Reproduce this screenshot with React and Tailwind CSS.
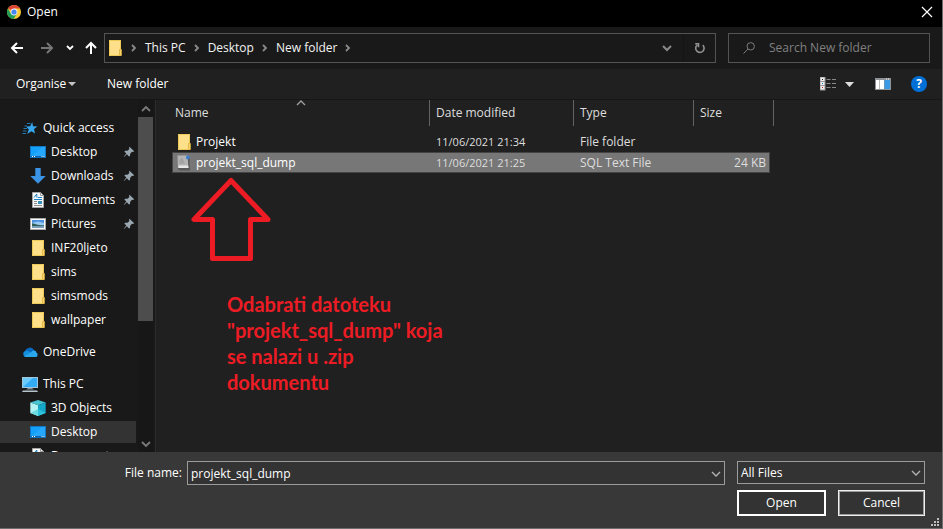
import React from "react";

const font = "font-['Open_Sans','Noto_Sans',sans-serif]";

function FolderIcon() {
  return (
    <svg className="h-4 w-4 shrink-0" viewBox="0 0 16 16">
      <rect x="2" y="0" width="12" height="16" fill="#ffe08a" />
      <path d="M2.5 0.5H13.5V9M2.5 0.5V15.5H12" fill="none" stroke="#efc956" />
      <rect x="12" y="9" width="2" height="6" fill="#ffe08a" />
      <path d="M12.5 15.5V9.5H14.5V15.5Z" fill="#fbd66a" stroke="#d8ab38" strokeWidth="0.7" />
    </svg>
  );
}

function ChromeIcon() {
  return (
    <svg className="h-4 w-4 shrink-0" viewBox="0 0 16 16">
      <circle cx="8" cy="8" r="7" fill="#fbc834" />
      <path d="M8 8L1.94 4.5A7 7 0 0 1 14.06 4.5H8Z" fill="#dc4437" />
      <path d="M8 8L4.9 9.7L1.94 4.5A7 7 0 0 0 7.6 15L11 9.8Z" fill="#1f9d58" />
      <circle cx="8" cy="8" r="3.4" fill="#f4f4f4" />
      <circle cx="8" cy="8" r="2.6" fill="#4486f4" />
    </svg>
  );
}

function StarIcon() {
  return (
    <svg className="h-4 w-4 shrink-0" viewBox="0 0 16 16">
      <path d="M10.2 2L11 6.2L15.5 6.6L12 9L13 13.6L9.4 11.2L5.2 14L6.8 9.6L4.2 6.6L8.2 6.2Z" fill="#35a8f0" />
      <path d="M5 3.5H8.5M2.5 6H5M1.5 8.5H5M1 11H4.5M0.5 13.5H4" stroke="#2177b2" />
    </svg>
  );
}

function DesktopIcon() {
  return (
    <svg className="h-4 w-4 shrink-0" viewBox="0 0 16 16">
      <rect x="0.5" y="2.5" width="15" height="11" fill="#15a0fb" stroke="#1278c4" />
      <path d="M1 13L12 3H15V13Z" fill="#35adff" opacity="0.5" />
      <rect x="1" y="12" width="14" height="1.4" fill="#0a62ac" />
      <path d="M2 12.5H3M4 12.5H5M11.5 12.5H12.5M13.5 12.5H14.5" stroke="#fff" />
    </svg>
  );
}

function DownloadIcon() {
  return (
    <svg className="h-4 w-4 shrink-0" viewBox="0 0 16 16">
      <path d="M5.3 0H10.7V8H15.7L8 15.7L0.3 8H5.3Z" fill="#3a93e4" />
    </svg>
  );
}

function DocumentIcon() {
  return (
    <svg className="h-4 w-4 shrink-0" viewBox="0 0 16 16">
      <path d="M2.5 0.5H10.5L13.5 3.5V15.5H2.5Z" fill="#f8f8f8" stroke="#a6a6a6" />
      <path d="M10.5 0.5V3.5H13.5" fill="none" stroke="#999" />
      <path d="M4 5.5L6.8 2V5.5M7.8 5.5H12M4 7.5H12" fill="none" stroke="#1d83c9" />
      <path d="M4 9.5H7M4 11.5H7M4 13.5H12" stroke="#8c8c8c" />
      <rect x="8" y="9" width="4" height="3" fill="#3292bb" />
    </svg>
  );
}

function PicturesIcon() {
  return (
    <svg className="h-4 w-4 shrink-0" viewBox="0 0 16 16">
      <rect x="0.5" y="2.5" width="15" height="11" fill="#f8f8f8" stroke="#aaa" />
      <rect x="2" y="4" width="12" height="8" fill="#9bcbf3" />
      <path d="M2 4H14V7L8 5.5L2 7Z" fill="#4a91e0" />
      <path d="M2 7.2C5 7.5 8 9.5 14 9.3V10.5H2Z" fill="#315f57" />
      <rect x="2" y="10.3" width="12" height="1.7" fill="#7c9fbb" />
    </svg>
  );
}

function CloudIcon() {
  return (
    <svg className="h-4 w-4 shrink-0" viewBox="0 0 16 16">
      <path d="M3 7A5 5 0 0 1 12 6L14 9L4 12Z" fill="#0868bd" />
      <path d="M3.5 13A3.3 3.3 0 0 1 3.5 6.7C6 6.4 7 8 12 9V13Z" fill="#1490df" />
      <path d="M9 9C10 5.8 14 5.8 14.3 8.5A2.4 2.4 0 0 1 13.7 13H4Z" fill="#2baaf0" />
      <path d="M2.2 12.6L9 8.6L15.3 12.2C14.9 12.8 14.4 13 13.7 13H3.5C3 13 2.6 12.9 2.2 12.6Z" fill="#28a8ea" />
    </svg>
  );
}

function PcIcon() {
  return (
    <svg className="h-4 w-4 shrink-0" viewBox="0 0 16 16">
      <rect x="0.5" y="1.5" width="15" height="10" fill="#34abf5" stroke="#a2c6dc" />
      <path d="M1 11L11 2H1Z" fill="#6bcbfb" />
      <path d="M4 13.5L6 12H10L12 13.5Z" fill="#82919b" />
      <path d="M1 14.5H15L16 16H0Z" fill="#b7c5cf" />
    </svg>
  );
}

function CubeIcon() {
  return (
    <svg className="h-4 w-4 shrink-0" viewBox="0 0 16 16">
      <path d="M8 0L15.7 2.5L8 5.2L0.3 2.5Z" fill="#45c3d1" />
      <path d="M0.3 2.5L8 5.2V16L0.3 13Z" fill="#b4f3f3" />
      <path d="M15.7 2.5L8 5.2V16L15.7 13Z" fill="#14a7c9" />
      <path d="M0.3 13L8 9V16Z" fill="#6bdce2" />
      <path d="M15.7 13L8 9V16Z" fill="#2fc1da" />
    </svg>
  );
}

function SqlFileIcon() {
  return (
    <svg className="h-4 w-4 shrink-0" viewBox="0 0 16 16">
      <path d="M2 2L13.5 3L14 15.5H4L2 14Z" fill="#585858" />
      <path d="M1.5 0.5H11.5L12.5 13H2Z" fill="#b4b4b4" />
      <path d="M3.5 5L6 2.5L9 8.5L3.5 9Z" fill="#a2a2a2" />
      <path d="M2.5 10.5H12L12.5 13H2.5Z" fill="#e6e6e6" />
      <circle cx="11.8" cy="2.4" r="1.9" fill="#3a80d2" />
    </svg>
  );
}

function PinIcon() {
  return (
    <svg className="h-3 w-3 shrink-0" viewBox="0 0 12 12">
      <path d="M6.5 0.8L11.2 5.2L10 6L9 5.8L7.2 7.8L7 10L6 10.4L3.9 8.3L1 11L0.8 10.8L3.3 7.6L1.4 5.6L2 4.8L4.4 4.7L6.4 2.9L6 1.7Z" fill="#9aa7b0" />
    </svg>
  );
}

function Chevron({ className = "", d = "M1 3L5 7L9 3", width = 1.3 }) {
  return (
    <svg className={`h-[10px] w-[10px] shrink-0 ${className}`} viewBox="0 0 10 10">
      <path d={d} fill="none" stroke="currentColor" strokeWidth={width} />
    </svg>
  );
}

const groups = [
  {
    name: "Quick access",
    Icon: StarIcon,
    items: [
      { name: "Desktop", Icon: DesktopIcon, pinned: true },
      { name: "Downloads", Icon: DownloadIcon, pinned: true },
      { name: "Documents", Icon: DocumentIcon, pinned: true },
      { name: "Pictures", Icon: PicturesIcon, pinned: true },
      { name: "INF20ljeto", Icon: FolderIcon },
      { name: "sims", Icon: FolderIcon },
      { name: "simsmods", Icon: FolderIcon },
      { name: "wallpaper", Icon: FolderIcon },
    ],
  },
  { name: "OneDrive", Icon: CloudIcon, items: [] },
  {
    name: "This PC",
    Icon: PcIcon,
    items: [
      { name: "3D Objects", Icon: CubeIcon },
      { name: "Desktop", Icon: DesktopIcon, current: true },
      { name: "Documents", Icon: DocumentIcon },
    ],
  },
];

function SideItem({ item, nested }) {
  const { name, Icon, pinned, current } = item;
  return (
    <li className="py-px">
      <button
        type="button"
        className={`flex h-[22px] w-full items-center gap-[5px] pr-px ${nested ? "pl-[30px]" : "pl-[22px]"} ${current ? "bg-[#333333]" : ""}`}
      >
        <Icon />
        <span className="flex-1 text-left">{name}</span>
        {pinned && <PinIcon />}
      </button>
    </li>
  );
}

function Sidebar() {
  return (
    <div className="flex w-[156px] shrink-0 border-r border-[#2b2b2b] bg-[#191919]">
      <nav className="w-[136px] overflow-hidden pt-4" aria-label="Folders">
        <ul className="flex flex-col gap-2">
          {groups.map((g) => (
            <li key={g.name}>
              <ul>
                <SideItem item={g} />
                {g.items.map((i) => (
                  <SideItem key={i.name} item={i} nested />
                ))}
              </ul>
            </li>
          ))}
        </ul>
      </nav>
      <div className="ml-0.5 flex w-[15px] flex-col items-center bg-[#171717] text-[#7a7a7a]">
        <div className="flex h-[17px] shrink-0 items-center">
          <Chevron d="M1 7L5 3L9 7" width={1.8} />
        </div>
        <div className="h-[204px] w-full bg-[#4d4d4d]" />
        <div className="mt-auto flex h-4 shrink-0 items-center">
          <Chevron width={1.8} />
        </div>
      </div>
    </div>
  );
}

const files = [
  { name: "Projekt", date: "11/06/2021 21:34", type: "File folder", size: "", Icon: FolderIcon },
  { name: "projekt_sql_dump", date: "11/06/2021 21:25", type: "SQL Text File", size: "24 KB", Icon: SqlFileIcon, selected: true },
];

function FileList() {
  return (
    <table className="ml-4 w-[598px] table-fixed border-collapse text-left">
      <colgroup>
        <col className="w-[258px]" />
        <col className="w-[144px]" />
        <col className="w-[120px]" />
        <col className="w-[76px]" />
      </colgroup>
      <thead className="text-[#dedede]">
        <tr>
          <th className="p-0 pb-[5px] font-normal">
            <div className="relative flex h-[26px] items-center border-r border-[#636363] pl-[3px]">
              Name
              <Chevron className="absolute left-1/2 top-0 -translate-x-1/2 text-[#a0a0a0]" d="M1 5L5 1L9 5" />
            </div>
          </th>
          <th className="p-0 pb-[5px] font-normal">
            <div className="flex h-[26px] items-center border-r border-[#636363] pl-1.5">Date modified</div>
          </th>
          <th className="p-0 pb-[5px] font-normal">
            <div className="flex h-[26px] items-center border-r border-[#636363] pl-1.5">Type</div>
          </th>
          <th className="p-0 pb-[5px] font-normal">
            <div className="flex h-[26px] w-20 items-center border-r border-[#636363] pl-1.5">Size</div>
          </th>
        </tr>
      </thead>
      <tbody>
        {files.map(({ name, date, type, size, Icon, selected }) => (
          <tr key={name} className={selected ? "bg-[#777777] outline-1 -outline-offset-1 outline-[#444444]" : ""}>
            <td className="h-[21px] p-0 pl-1">
              <div className="flex items-center gap-1">
                <Icon />
                {name}
              </div>
            </td>
            <td className="p-0 pl-1.5 text-[11px] text-[#dedede]">{date}</td>
            <td className="p-0 pl-1.5 text-[#dedede]">{type}</td>
            <td className="p-0 pr-1 text-right text-[#dedede]">{size}</td>
          </tr>
        ))}
      </tbody>
    </table>
  );
}

function NavBar() {
  return (
    <div className="flex h-[42px] shrink-0 items-center bg-[#191919] pl-2 pr-3">
      <button type="button" aria-label="Back" className="flex w-[30px] justify-start pl-0.5">
        <svg className="h-[14px] w-[14px]" viewBox="0 0 14 14" fill="none" stroke="#fff" strokeWidth="2">
          <path d="M13 7H2M7 2L2 7L7 12" />
        </svg>
      </button>
      <button type="button" aria-label="Forward" className="flex w-[28px] justify-start pl-0.5">
        <svg className="h-[14px] w-[14px]" viewBox="0 0 14 14" fill="none" stroke="#777" strokeWidth="2">
          <path d="M1 7H12M7 2L12 7L7 12" />
        </svg>
      </button>
      <button type="button" aria-label="Recent locations" className="mr-2.5">
        <svg className="h-2 w-2" viewBox="0 0 8 8" fill="none" stroke="#fff" strokeWidth="1.8">
          <path d="M1 2L4 5L7 2" />
        </svg>
      </button>
      <button type="button" aria-label="Up" className="mr-1.5">
        <svg className="h-[14px] w-[14px]" viewBox="0 0 14 14" fill="none" stroke="#fff" strokeWidth="2">
          <path d="M7 13V2M2 7L7 2L12 7" />
        </svg>
      </button>
      <div className="flex h-[30px] flex-1 items-center border border-[#535353] pl-0.5 text-[#f2f2f2]">
        <FolderIcon />
        {["This PC", "Desktop", "New folder"].map((p) => (
          <React.Fragment key={p}>
            <Chevron className="mx-1.5 text-[#8a8a8a] first-of-type:ml-1" d="M3 2L6 5L3 8" width={1.8} />
            <button type="button">{p}</button>
          </React.Fragment>
        ))}
        <Chevron className="ml-1.5 text-[#8a8a8a]" d="M3 2L6 5L3 8" width={1.8} />
        <button type="button" aria-label="Previous locations" className="ml-auto mr-[11px] text-[#8a8a8a]">
          <Chevron width={2} />
        </button>
        <button type="button" aria-label="Refresh" className="flex h-full w-8 items-center justify-center border-l border-[#141414]">
          <svg className="h-3 w-3" viewBox="0 0 12 12" fill="none" stroke="#929292" strokeWidth="1.6">
            <path d="M3.2 3A4.2 4.2 0 1 0 8.8 3.2M1.2 1.8H4.5V5.2" />
          </svg>
        </button>
      </div>
      <label className="ml-3 flex h-[30px] w-[202px] items-center gap-[14px] border border-[#535353] pl-3.5">
        <svg className="h-3 w-3 shrink-0" viewBox="0 0 12 12" fill="none" stroke="#7c7c7c">
          <circle cx="7.7" cy="4.3" r="3.7" />
          <path d="M5 7L0.5 11.5" />
        </svg>
        <input
          type="text"
          aria-label="Search"
          placeholder="Search New folder"
          className="w-full min-w-0 bg-transparent outline-none placeholder:text-[#808080]"
        />
      </label>
    </div>
  );
}

function ToolBar() {
  return (
    <div className="flex h-[31px] shrink-0 items-center border-b border-[#161616] bg-[#202020] pl-4 pr-[15px]">
      <button type="button" className="flex w-[91px] items-center gap-0.5">
        Organise
        <svg className="h-1 w-2" viewBox="0 0 8 4" fill="#c4c4c4"><path d="M0 0H8L4 4Z" /></svg>
      </button>
      <button type="button">New folder</button>
      <button type="button" aria-label="Change your view" className="ml-auto mr-[21px] flex items-center gap-[9px]">
        <svg className="h-[14px] w-4" viewBox="0 0 16 14">
          <rect width="5" height="13" fill="#eee" stroke="#999" />
          <path d="M0 4.5H5M0 8.5H5" stroke="#999" />
          <path d="M2 2.5H3" stroke="#222" />
          <path d="M2 6.5H3" stroke="#2778d8" />
          <path d="M2 10.5H3" stroke="#c02020" />
          <path d="M6.5 2.5H10.5M12 2.5H16M6.5 6.5H10.5M12 6.5H16M6.5 10.5H10.5M12 10.5H16" stroke="#888" />
        </svg>
        <svg className="h-[5px] w-[9px]" viewBox="0 0 9 5" fill="#ddd"><path d="M0 0H9L4.5 5Z" /></svg>
      </button>
      <button type="button" aria-label="Show the preview pane" className="mr-5">
        <svg className="h-3 w-4" viewBox="0 0 16 12">
          <rect width="16" height="12" fill="#8e9296" />
          <rect x="1" y="2" width="8" height="9" fill="#fff" />
          <rect x="4" y="2" width="1" height="9" fill="#bbb" />
          <rect x="9.5" y="2" width="5.5" height="9" fill="#3c9ae5" />
          <path d="M11 1H12M13 1H14" stroke="#fff" />
        </svg>
      </button>
      <button type="button" aria-label="Help" className="flex h-4 w-4 items-center justify-center rounded-full bg-[#006fd6] font-bold">
        ?
      </button>
    </div>
  );
}

export default function App() {
  return (
    <div className={`${font} flex h-screen flex-col border-b border-r border-[#6d6d6d] bg-[#202020] text-[12px] leading-4 text-white`}>
      <header className="flex h-[27px] shrink-0 items-center bg-black pb-[3px] pl-1.5 pr-[9px]">
        <ChromeIcon />
        <h1 className="ml-[5px] flex-1">Open</h1>
        <button type="button" aria-label="Close">
          <svg className="h-3 w-3" viewBox="0 0 12 12" stroke="#fff" strokeWidth="1.2">
            <path d="M1 1L11 11M11 1L1 11" />
          </svg>
        </button>
      </header>
      <NavBar />
      <ToolBar />
      <div className="flex min-h-0 flex-1">
        <Sidebar />
        <main className="relative min-w-0 flex-1">
          <FileList />
          <svg className="absolute left-[34px] top-[76px] h-[86px] w-[82px]" viewBox="0 0 82 86" fill="none" stroke="#ed1c24" strokeWidth="5" strokeLinejoin="round">
            <path d="M41 4.5L4 43.5H22.5V82.5H60.5V43.5H78Z" />
          </svg>
          <p className="absolute left-[71px] top-[191px] w-[226px] font-['Lato','Open_Sans',sans-serif] text-[20px] font-bold leading-[26px] text-[#ed1c24]">
            Odabrati datoteku "projekt_sql_dump" koja se nalazi u .zip dokumentu
          </p>
        </main>
      </div>
      <footer className="flex h-[76px] shrink-0 bg-[#383838]">
        <div className="flex flex-1 items-start pt-[9px]">
          <label htmlFor="file-name" className="w-[187px] pr-[5px] pt-1 text-right">
            File name:
          </label>
          <div className="relative flex-1">
            <input
              id="file-name"
              type="text"
              defaultValue="projekt_sql_dump"
              className="h-6 w-full border border-[#9b9b9b] bg-[#333333] pl-[3px] pr-6 outline-none"
            />
            <Chevron className="pointer-events-none absolute right-1 top-2 text-[#b4b4b4]" />
          </div>
        </div>
        <div className="relative w-[217px] pl-3 pr-[17px] pt-[9px]">
          <div className="relative">
            <select
              aria-label="File type"
              className="h-[23px] w-full appearance-none border border-[#9b9b9b] bg-[#333333] pl-[3px] outline-none"
            >
              <option>All Files</option>
            </select>
            <Chevron className="pointer-events-none absolute right-1 top-[7px] text-[#b4b4b4]" />
          </div>
          <div className="mt-1.5 flex gap-3">
            <button type="button" className="h-[26px] flex-1 border-2 border-white bg-[#333333]">
              Open
            </button>
            <button type="button" className="h-[26px] flex-1 border border-[#efefef] bg-[#333333] outline-1 -outline-offset-2 outline-[#9b9b9b]">
              Cancel
            </button>
          </div>
          <svg className="absolute bottom-0.5 right-[3px] h-2 w-2" viewBox="0 0 8 8" fill="#bdbdbd">
            <path d="M6 0h2v2h-2zM3 3h2v2h-2zM6 3h2v2h-2zM0 6h2v2h-2zM3 6h2v2h-2zM6 6h2v2h-2z" />
          </svg>
        </div>
      </footer>
    </div>
  );
}
